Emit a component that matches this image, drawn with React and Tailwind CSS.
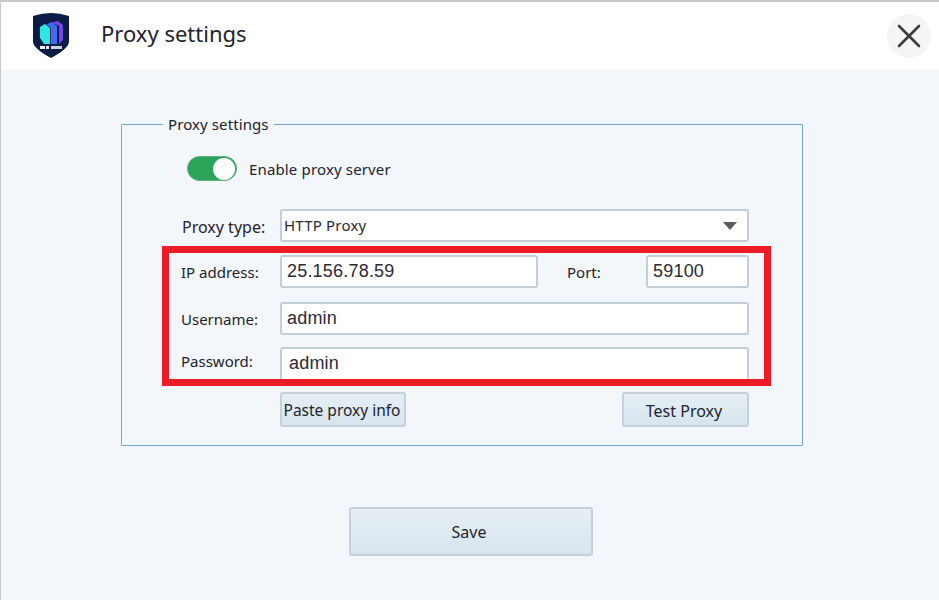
const ui = "font-['Noto_Sans','Open_Sans',sans-serif]"
const field = "h-[33px] rounded-[3px] border-2 border-[#c3cfd8] bg-white px-[5px] font-['Liberation_Sans',sans-serif] text-[18px] tracking-[0.2px] text-[#2a2a35] outline-none"
const btn = "rounded-[3px] border-2 border-[#c5d0d8] bg-gradient-to-b from-[#e6eff5] to-[#d7e5ee] text-[#23232e]"

function Logo() {
  return (
    <svg width="38" height="47" viewBox="0 0 38 47" className="ml-[31px] -mt-[2px] shrink-0">
      <path d="M1 4 Q10 1 19 1 Q28 1 37 4 V30 Q36 37 19 46 Q2 37 1 30 Z" fill="#0b1d45" />
      <path d="M8 15 L13 12 L18 16 V32 H12 L8 26 Z" fill="#2fe6e2" />
      <path d="M15 12 L20 10 L25 14 V32 H19 V16 L15 13 Z" fill="#3f6cf2" />
      <path d="M21 10 L26 9 L31 13 V28 L27 32 V14 L21 11 Z" fill="#7a3ff0" />
      <rect x="8" y="34" width="5" height="3" fill="#e8edf5" />
      <rect x="14" y="34" width="3" height="3" fill="#e8edf5" />
      <rect x="19" y="34" width="11" height="3" fill="#c9d2e2" />
    </svg>
  )
}

function Row({ label, labelClass, children, className }) {
  return (
    <div className={`flex items-center ${className}`}>
      <label className={`w-[99px] shrink-0 text-[15px] leading-5 text-[#23232e] ${labelClass}`}>{label}</label>
      {children}
    </div>
  )
}

export default function App() {
  return (
    <div className={`${ui} relative h-[600px] w-[939px] overflow-hidden border-t-2 border-l border-[#c8c9cc] bg-[#f3f6fb]`}>
      <header className="flex h-[68px] items-center bg-white">
        <Logo />
        <h1 className="ml-[31px] -mt-[6px] text-[22px] leading-8 text-[#23232e]">Proxy settings</h1>
        <button className="ml-auto mr-[8px] flex h-[44px] w-[44px] items-center justify-center rounded-full bg-[#f5f5f5]">
          <svg width="24" height="24" viewBox="0 0 24 24" fill="none" stroke="#3c3c3c" strokeWidth="2.6" strokeLinecap="round">
            <path d="M2 2 L22 22 M22 2 L2 22" />
          </svg>
        </button>
      </header>

      <fieldset className="ml-[120px] mt-[43px] h-[333px] w-[682px] rounded-[1px] border border-[#6fa9d0] pl-[59px] pr-[52px]">
        <legend className="-ml-[18px] px-[5px] text-[15px] leading-[22px] tracking-[0.1px] text-[#23232e]">Proxy settings</legend>

        <div className="ml-[6px] mt-[21px] flex items-center gap-[12px]">
          <div className="flex h-[25px] w-[50px] items-center justify-end rounded-full border border-[#5fb280] bg-[#2ba45a] pr-[1px]">
            <div className="h-[22px] w-[22px] rounded-full bg-white" />
          </div>
          <span className="text-[15px] leading-5 tracking-[0.15px] text-[#23232e]">Enable proxy server</span>
        </div>

        <Row label="Proxy type:" labelClass="!text-[16px] mt-[3px] ml-[1px] -mr-[1px]" className="mt-[28px]">
          <div className={`${field} flex w-[469px] items-center justify-between pl-[2px] pr-[10px]`}>
            <span className={`${ui} text-[15px] tracking-[0.2px]`}>HTTP Proxy</span>
            <svg width="14" height="8" viewBox="0 0 14 8"><path d="M0 0 H14 L7 8 Z" fill="#5c5c5c" /></svg>
          </div>
        </Row>

        <Row label="IP address:" className="mt-[13px]">
          <input readOnly value="25.156.78.59" className={`${field} w-[258px] px-[4px]`} />
          <label className="ml-[29px] w-[79px] text-[15px] leading-5 text-[#23232e]">Port:</label>
          <input readOnly value="59100" className={`${field} w-[103px]`} />
        </Row>

        <Row label="Username:" className="mt-[14px]">
          <input readOnly value="admin" className={`${field} w-[469px]`} />
        </Row>

        <Row label="Password:" labelClass="-mt-[8px]" className="mt-[12px]">
          <input readOnly value="admin" className={`${field} !h-[36px] w-[469px] px-[7px] pb-[3px]`} />
        </Row>

        <div className="ml-[99px] mt-[9px] flex w-[469px] justify-between">
          <button className={`${btn} h-[35px] w-[126px] pr-[2px] pt-[3px] text-[15.5px]`}>Paste proxy info</button>
          <button className={`${btn} h-[35px] w-[127px] pr-[3px] pt-[3px] text-[16px]`}>Test Proxy</button>
        </div>
      </fieldset>

      <div className="ml-[348px] mt-[61px]">
        <button className={`${btn} h-[49px] w-[244px] pr-[4px] text-[16px]`}>Save</button>
      </div>

      <div className="absolute left-[161px] top-[244px] h-[140px] w-[609px] border-[7px] border-[#ed1c24]" />
    </div>
  )
}
